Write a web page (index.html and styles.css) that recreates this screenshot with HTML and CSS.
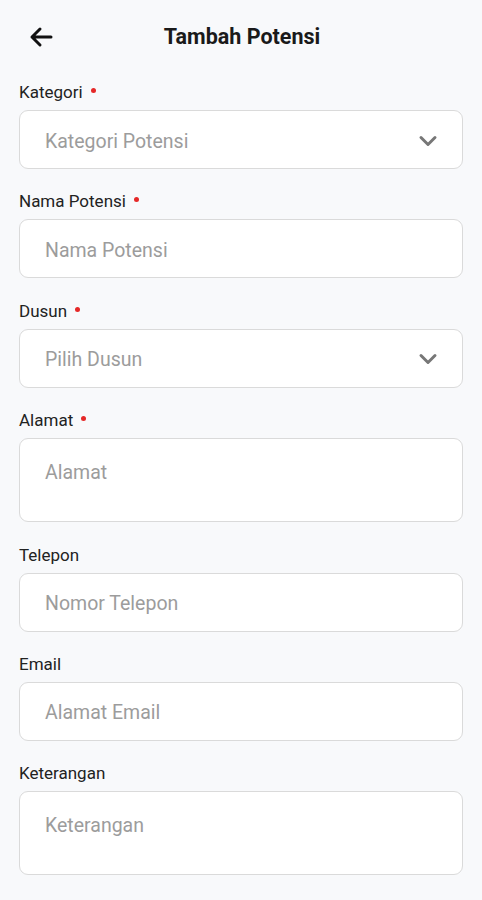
FILE: index.html
```html
<!DOCTYPE html>
<html lang="id">
<head>
<meta charset="utf-8">
<title>Tambah Potensi</title>
<link rel="stylesheet" href="styles.css">
</head>
<body>
<div class="app">
  <header class="topbar">
    <span class="back">
      <svg width="26" height="22" viewBox="0 0 26 22"><path d="M23 11H4M12 3L4 11l8 8" fill="none" stroke="#111" stroke-width="3" stroke-linecap="round" stroke-linejoin="round"/></svg>
    </span>
    <h1 class="title">Tambah Potensi</h1>
  </header>
  <form class="form">
    <div class="field">
      <div class="label">Kategori <span class="req"></span></div>
      <div class="box select"><span class="ph">Kategori Potensi</span><span class="chev"><svg width="20" height="12" viewBox="0 0 20 12"><path d="M3 2.5l7 7 7-7" fill="none" stroke="#777" stroke-width="3" stroke-linecap="round" stroke-linejoin="round"/></svg></span></div>
    </div>
    <div class="field">
      <div class="label">Nama Potensi <span class="req"></span></div>
      <div class="box"><span class="ph">Nama Potensi</span></div>
    </div>
    <div class="field">
      <div class="label">Dusun <span class="req"></span></div>
      <div class="box select"><span class="ph">Pilih Dusun</span><span class="chev"><svg width="20" height="12" viewBox="0 0 20 12"><path d="M3 2.5l7 7 7-7" fill="none" stroke="#777" stroke-width="3" stroke-linecap="round" stroke-linejoin="round"/></svg></span></div>
    </div>
    <div class="field">
      <div class="label">Alamat <span class="req"></span></div>
      <div class="box multi"><span class="ph">Alamat</span></div>
    </div>
    <div class="field">
      <div class="label">Telepon</div>
      <div class="box"><span class="ph">Nomor Telepon</span></div>
    </div>
    <div class="field">
      <div class="label">Email</div>
      <div class="box"><span class="ph">Alamat Email</span></div>
    </div>
    <div class="field">
      <div class="label">Keterangan</div>
      <div class="box multi"><span class="ph">Keterangan</span></div>
    </div>
  </form>
</div>
</body>
</html>
```
FILE: styles.css
```css
* { box-sizing: border-box; }
html, body { margin: 0; padding: 0; }
body {
  background: #f8f9fb;
  font-family: Roboto, "Liberation Sans", sans-serif;
  color: #1d1d1d;
}
.app { width: 482px; min-height: 900px; }
.topbar {
  height: 72px;
  display: flex;
  align-items: center;
  justify-content: center;
  position: relative;
}
.back {
  position: absolute;
  left: 28px;
  top: 26px;
  display: flex;
}
.title {
  margin: 0;
  font-size: 21.5px;
  font-weight: 700;
  color: #1a1a1a;
  margin-left: 2px;
}
.form { padding: 10px 19px 0 19px; }
.field { margin-bottom: 22.4px; }
.label {
  height: 20px;
  line-height: 20px;
  font-size: 17px;
  margin-bottom: 8px;
  display: flex;
  align-items: center;
  color: #222;
}
.req {
  width: 5px;
  height: 5px;
  border-radius: 50%;
  background: #e52828;
  margin-left: 8px;
  margin-top: -3px;
}
.box {
  height: 59px;
  background: #fff;
  border: 1px solid #dadada;
  border-radius: 9px;
  display: flex;
  align-items: center;
  padding: 0 25px 0 25px;
}
.ph { font-size: 19.5px; color: #9c9c9c; flex: 1; padding-top: 3px; }
.chev { display: flex; margin-right: -1px; margin-top: 2px; }
.multi {
  height: 84px;
  align-items: flex-start;
  padding-top: 19px;
}
```
